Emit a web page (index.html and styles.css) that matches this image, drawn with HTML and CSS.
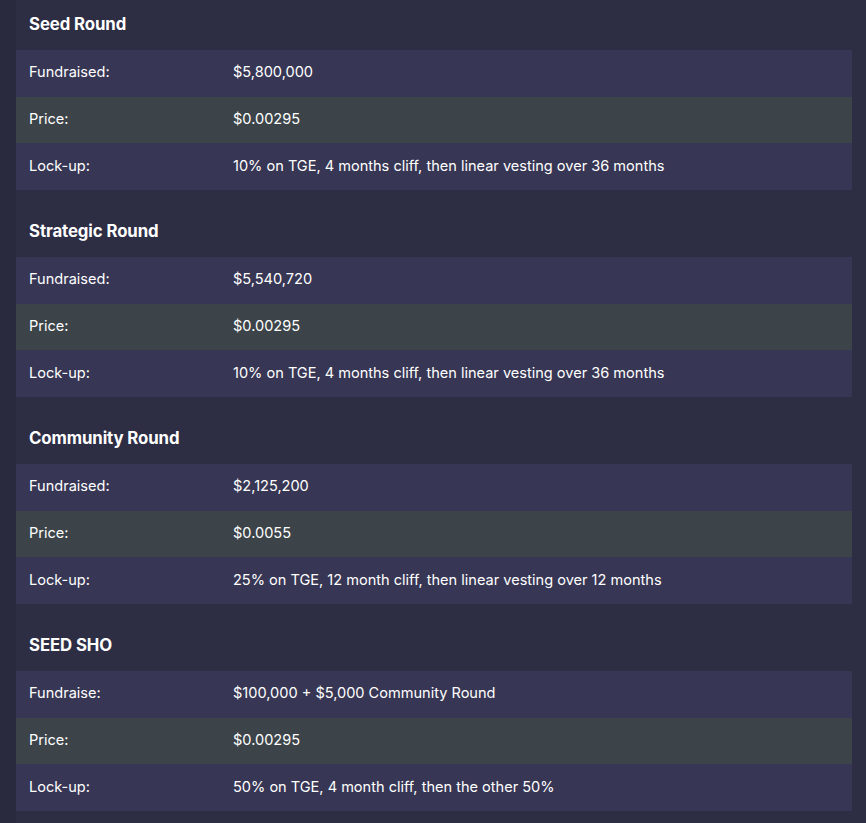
FILE: index.html
```html
<!DOCTYPE html>
<html lang="en">
<head>
<meta charset="utf-8">
<title>Rounds</title>
<link rel="stylesheet" href="styles.css">
</head>
<body>
<main class="panel">
  <section class="round">
    <h3 class="round-title">Seed Round</h3>
    <div class="rows">
      <div class="row"><span class="label">Fundraised:</span><span class="value">$5,800,000</span></div>
      <div class="row alt"><span class="label">Price:</span><span class="value">$0.00295</span></div>
      <div class="row"><span class="label">Lock-up:</span><span class="value">10% on TGE, 4 months cliff, then linear vesting over 36 months</span></div>
    </div>
  </section>
  <section class="round">
    <h3 class="round-title">Strategic Round</h3>
    <div class="rows">
      <div class="row"><span class="label">Fundraised:</span><span class="value">$5,540,720</span></div>
      <div class="row alt"><span class="label">Price:</span><span class="value">$0.00295</span></div>
      <div class="row"><span class="label">Lock-up:</span><span class="value">10% on TGE, 4 months cliff, then linear vesting over 36 months</span></div>
    </div>
  </section>
  <section class="round">
    <h3 class="round-title">Community Round</h3>
    <div class="rows">
      <div class="row"><span class="label">Fundraised:</span><span class="value">$2,125,200</span></div>
      <div class="row alt"><span class="label">Price:</span><span class="value">$0.0055</span></div>
      <div class="row"><span class="label">Lock-up:</span><span class="value">25% on TGE, 12 month cliff, then linear vesting over 12 months</span></div>
    </div>
  </section>
  <section class="round">
    <h3 class="round-title">SEED SHO</h3>
    <div class="rows">
      <div class="row"><span class="label">Fundraise:</span><span class="value">$100,000 + $5,000 Community Round</span></div>
      <div class="row alt"><span class="label">Price:</span><span class="value">$0.00295</span></div>
      <div class="row"><span class="label">Lock-up:</span><span class="value">50% on TGE, 4 month cliff, then the other 50%</span></div>
    </div>
  </section>
</main>
</body>
</html>
```
FILE: styles.css
```css
html, body {
  margin: 0;
  padding: 0;
}
body {
  background: #292a3d;
  font-family: Inter, "Noto Sans", sans-serif;
  color: #ffffff;
  padding-left: 16px;
  min-height: 823px;
}
.panel {
  background: #2d2d44;
  padding: 0 14px 12px 0;
  min-height: 811px;
}
.round + .round {
  margin-top: 17px;
}
.round-title {
  margin: 0;
  height: 50px;
  line-height: 49px;
  padding-left: 13px;
  font-size: 16.8px;
  font-weight: 700;
  color: #ffffff;
  letter-spacing: -0.1px;
}
.rows {
  display: flex;
  flex-direction: column;
}
.row {
  display: grid;
  grid-template-columns: 204px 1fr;
  background: #373654;
  height: 46.67px;
  box-sizing: border-box;
  padding-bottom: 2px;
  align-items: center;
  font-size: 14.55px;
}
.row.alt {
  background: #3c4449;
}
.label {
  padding-left: 13px;
}
.value {
  padding-left: 13px;
}
```
